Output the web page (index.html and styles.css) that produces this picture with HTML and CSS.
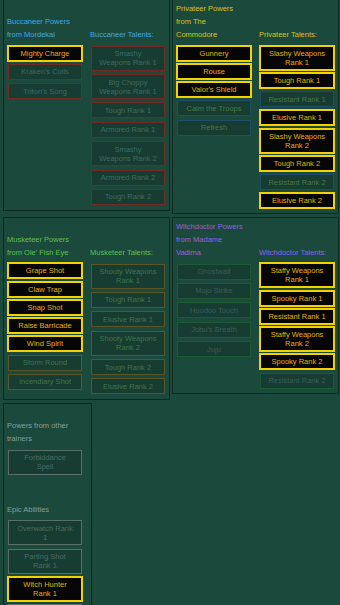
FILE: index.html
```html
<!DOCTYPE html>
<html lang="en">
<head>
    <meta charset="UTF-8" />
    <meta name="viewport" content="width=device-width, initial-scale=1.0" />
    <title>Trainer Powers</title>
    <link rel="stylesheet" href="styles.css">
</head>
<body>
    <div class="board">
        <section class="panel buccaneer">
            <div class="col">
                <h3 class="head">Buccaneer Powers<br>from Mordekai</h3>
                <div class="list">
                    <div class="btn on">Mighty Charge</div>
                    <div class="btn">Kraken's Coils</div>
                    <div class="btn">Triton's Song</div>
                </div>
            </div>
            <div class="col">
                <h3 class="head">Buccaneer Talents:</h3>
                <div class="list">
                    <div class="btn">Smashy Weapons Rank 1</div>
                    <div class="btn">Big Choppy Weapons Rank 1</div>
                    <div class="btn">Tough Rank 1</div>
                    <div class="btn">Armored Rank 1</div>
                    <div class="btn">Smashy Weapons Rank 2</div>
                    <div class="btn">Armored Rank 2</div>
                    <div class="btn">Tough Rank 2</div>
                </div>
            </div>
        </section>

        <section class="panel privateer">
            <div class="col">
                <h3 class="head">Privateer Powers<br>from The<br>Commodore</h3>
                <div class="list">
                    <div class="btn on">Gunnery</div>
                    <div class="btn on">Rouse</div>
                    <div class="btn on">Valor's Shield</div>
                    <div class="btn">Calm the Troops</div>
                    <div class="btn">Refresh</div>
                </div>
            </div>
            <div class="col">
                <h3 class="head">Privateer Talents:</h3>
                <div class="list">
                    <div class="btn on">Slashy Weapons Rank 1</div>
                    <div class="btn on">Tough Rank 1</div>
                    <div class="btn">Resistant Rank 1</div>
                    <div class="btn on">Elusive Rank 1</div>
                    <div class="btn on">Slashy Weapons Rank 2</div>
                    <div class="btn on">Tough Rank 2</div>
                    <div class="btn">Resistant Rank 2</div>
                    <div class="btn on">Elusive Rank 2</div>
                </div>
            </div>
        </section>

        <section class="panel musketeer">
            <div class="col">
                <h3 class="head">Musketeer Powers<br>from Ole' Fish Eye</h3>
                <div class="list">
                    <div class="btn on">Grape Shot</div>
                    <div class="btn on">Claw Trap</div>
                    <div class="btn on">Snap Shot</div>
                    <div class="btn on">Raise Barricade</div>
                    <div class="btn on">Wind Spirit</div>
                    <div class="btn">Storm Round</div>
                    <div class="btn">Incendiary Shot</div>
                </div>
            </div>
            <div class="col">
                <h3 class="head">Musketeer Talents:</h3>
                <div class="list">
                    <div class="btn">Shooty Weapons Rank 1</div>
                    <div class="btn">Tough Rank 1</div>
                    <div class="btn">Elusive Rank 1</div>
                    <div class="btn">Shooty Weapons Rank 2</div>
                    <div class="btn">Tough Rank 2</div>
                    <div class="btn">Elusive Rank 2</div>
                </div>
            </div>
        </section>

        <section class="panel witchdoctor">
            <div class="col">
                <h3 class="head">Witchdoctor Powers<br>from Madame<br>Vadima</h3>
                <div class="list">
                    <div class="btn">Ghostwail</div>
                    <div class="btn">Mojo Strike</div>
                    <div class="btn">Hoodoo Touch</div>
                    <div class="btn">Jobu's Breath</div>
                    <div class="btn">Juju</div>
                </div>
            </div>
            <div class="col">
                <h3 class="head">Witchdoctor Talents:</h3>
                <div class="list">
                    <div class="btn on">Staffy Weapons Rank 1</div>
                    <div class="btn on">Spooky Rank 1</div>
                    <div class="btn on">Resistant Rank 1</div>
                    <div class="btn on">Staffy Weapons Rank 2</div>
                    <div class="btn on">Spooky Rank 2</div>
                    <div class="btn">Resistant Rank 2</div>
                </div>
            </div>
        </section>

        <section class="panel other">
            <div class="col">
                <h3 class="head">Powers from other<br>trainers</h3>
                <div class="list">
                    <div class="btn">Forbiddance Spell</div>
                </div>
                <h3 class="head">Epic Abilities</h3>
                <div class="list">
                    <div class="btn">Overwatch Rank 1</div>
                    <div class="btn">Parting Shot Rank 1</div>
                    <div class="btn on">Witch Hunter Rank 1</div>
                    <div class="btn"></div>
                </div>
            </div>
        </section>
    </div>
</body>
</html>
```

FILE: styles.css
```css
:root {
    --page: #1b4a3c;
    --edge: #10291f;
    --off-bg: #173d32;
    --on-bg: #060606;
    --on-border: #f2d200;
    --on-text: #e6b000;
}

* {
    box-sizing: border-box;
    margin: 0;
    padding: 0;
}

body {
    font-family: 'Liberation Sans', Arial, sans-serif;
    font-size: 7.5px;
    background: var(--page);
}

.board {
    display: flex;
    flex-wrap: wrap;
    align-items: flex-start;
    gap: 3px 2px;
    margin-top: -1px;
    padding-left: 3px;
}

.panel {
    display: flex;
    gap: 7px;
    width: 167px;
    padding: 2px 3px 3px;
    border: 1px solid var(--edge);
}

.col {
    display: flex;
    flex-direction: column;
    width: 76px;
}

.head {
    display: flex;
    flex-direction: column;
    justify-content: flex-end;
    height: 39px;
    margin-bottom: 3px;
    font-size: 7.5px;
    font-weight: normal;
    line-height: 13px;
}

.list {
    display: flex;
    flex-direction: column;
}

.btn {
    min-height: 16px;
    margin: 1.7px 1px;
    padding: 2.5px 6px;
    border: 1px solid;
    background: var(--off-bg);
    text-align: center;
    line-height: 9px;
}

.btn.on {
    margin: 0.6px 0;
    padding: 2px 6px;
    border: 2px solid var(--on-border);
    background: var(--on-bg);
    color: var(--on-text);
}

/* trainer colours */
.buccaneer .head { color: #42a6e2; }
.buccaneer .btn { border-color: #742a24; color: #3d6a61; }

.privateer .head { color: #d8c21c; }
.privateer .btn { border-color: #1f4c68; color: #4b7444; }

.musketeer .head { color: #5cc04c; }
.musketeer .btn { border-color: #5a5528; color: #3f744a; }

.witchdoctor .head { color: #9160e6; }
.witchdoctor .btn { border-color: #1c5a34; color: #3c5c5a; }

.other {
    width: 89px;
    padding-right: 7px;
}

.other .head { color: #8a9c95; }
.other .btn { border-color: #5c6e68; color: #4a6a62; }

.panel .btn.on {
    border-color: var(--on-border);
    color: var(--on-text);
}
```
